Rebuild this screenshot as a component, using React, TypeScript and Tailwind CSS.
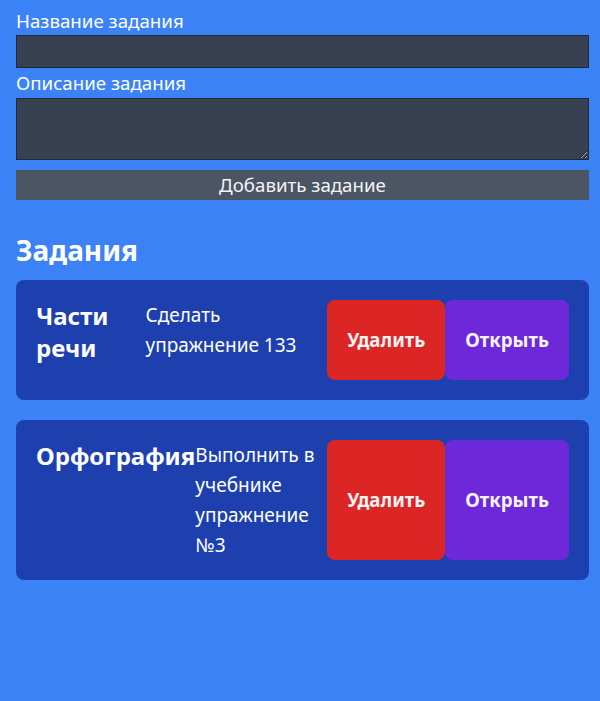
import React from "react";

const tasks = [
  { title: "Части речи", desc: "Сделать упражнение 133" },
  { title: "Орфография", desc: "Выполнить в учебнике упражнение №3" },
];

export default function App() {
  return (
    <div className="min-h-[701px] bg-[#3b82f6] pl-4 pr-[11px] pt-[7px] text-white font-['Noto_Sans',sans-serif]">
      <label className="block text-[18.7px] leading-7">Название задания</label>
      <input className="block h-[33px] w-full border border-[#1f2937] bg-[#374151] px-2 text-white outline-none" />
      <label className="block text-[18.7px] leading-[30px]">Описание задания</label>
      <textarea className="block h-[62px] w-full border border-[#1f2937] bg-[#374151] px-2 text-white outline-none" />
      <button className="mt-[10px] block h-[30px] w-full bg-[#4b5563] text-[18.7px] leading-[30px] text-[#f3f4f6]">
        Добавить задание
      </button>
      <h2 className="mt-[32px] mb-3 text-[28px] font-bold leading-9">Задания</h2>
      <div className="flex flex-col gap-5">
        {tasks.map((t) => (
          <div key={t.title} className="flex rounded-lg bg-[#1e40af] p-5">
            <h3 className="text-2xl font-bold leading-8">{t.title}</h3>
            <p className="text-[19px] leading-[30px]">{t.desc}</p>
            <div className="flex shrink-0">
              <button className="flex min-h-20 items-center rounded-lg bg-[#dc2626] px-5 text-[18.7px] font-bold text-[#fdf2f2]">
                Удалить
              </button>
              <button className="flex min-h-20 items-center rounded-lg bg-[#6d28d9] px-5 text-[18.7px] font-bold text-[#f5f3ff]">
                Открыть
              </button>
            </div>
          </div>
        ))}
      </div>
    </div>
  );
}
